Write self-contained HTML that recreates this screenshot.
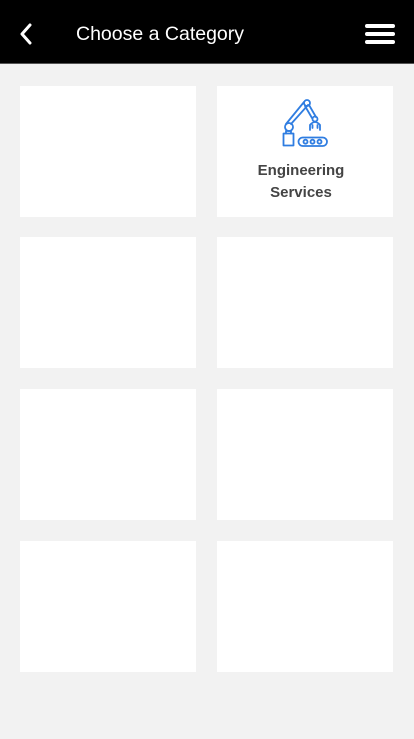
<!DOCTYPE html>
<html><head><meta charset="utf-8"><style>
*{margin:0;padding:0;box-sizing:border-box}
body{width:414px;height:739px;background:#f2f2f2;font-family:"Liberation Sans",Arial,sans-serif;position:relative;overflow:hidden}
.hdr{position:absolute;left:0;top:0;width:414px;height:64px;background:#000;border-bottom:1px solid #555}
.title{position:absolute;left:76px;top:23px;color:#fff;font-size:19.5px}
.card{position:absolute;background:#fff;width:176px;height:131px}
.lbl{position:absolute;left:0;right:8px;top:74px;text-align:center;color:#444;font-weight:bold;font-size:15px;line-height:22px}
</style></head><body>
<div class="hdr">
<svg style="position:absolute;left:18px;top:23px" width="16" height="22" viewBox="0 0 16 22"><path d="M12 2 L4 11 L12 20" stroke="#fff" stroke-width="3" fill="none" stroke-linecap="round" stroke-linejoin="round"/></svg>
<div class="title">Choose a Category</div>
<svg style="position:absolute;left:365px;top:23px" width="30" height="22" viewBox="0 0 30 22"><path d="M2 3H28M2 11H28M2 19H28" stroke="#fff" stroke-width="4" stroke-linecap="round"/></svg>
</div>
<div class="card" style="left:20px;top:86px"></div>
<div class="card" style="left:217px;top:86px">
<svg style="position:absolute;left:63px;top:9px" width="50" height="55" viewBox="0 0 50 55" fill="none" stroke="#2f7de1" stroke-width="1.8" stroke-linejoin="round" stroke-linecap="round">
<rect x="3.5" y="38.5" width="10" height="12"/>
<path d="M6 38.5V36H11V38.5"/>
<circle cx="9" cy="32" r="4"/>
<path d="M6 29L24 7M11 29L28 10"/>
<circle cx="27" cy="8" r="3"/>
<path d="M29 10L36 22M25 11L32 23"/>
<circle cx="35" cy="24" r="2.5"/>
<path d="M30 35V30Q35 24 40 30V35M32.5 30V33M37.5 30V33"/>
<rect x="18.5" y="42.5" width="28.5" height="8.5" rx="4.2"/>
<circle cx="25.5" cy="46.7" r="2"/><circle cx="32.5" cy="46.7" r="2"/><circle cx="39.5" cy="46.7" r="2"/>
</svg>
<div class="lbl">Engineering<br>Services</div>
</div>
<div class="card" style="left:20px;top:237px"></div>
<div class="card" style="left:217px;top:237px"></div>
<div class="card" style="left:20px;top:389px"></div>
<div class="card" style="left:217px;top:389px"></div>
<div class="card" style="left:20px;top:541px"></div>
<div class="card" style="left:217px;top:541px"></div>
</body></html>
